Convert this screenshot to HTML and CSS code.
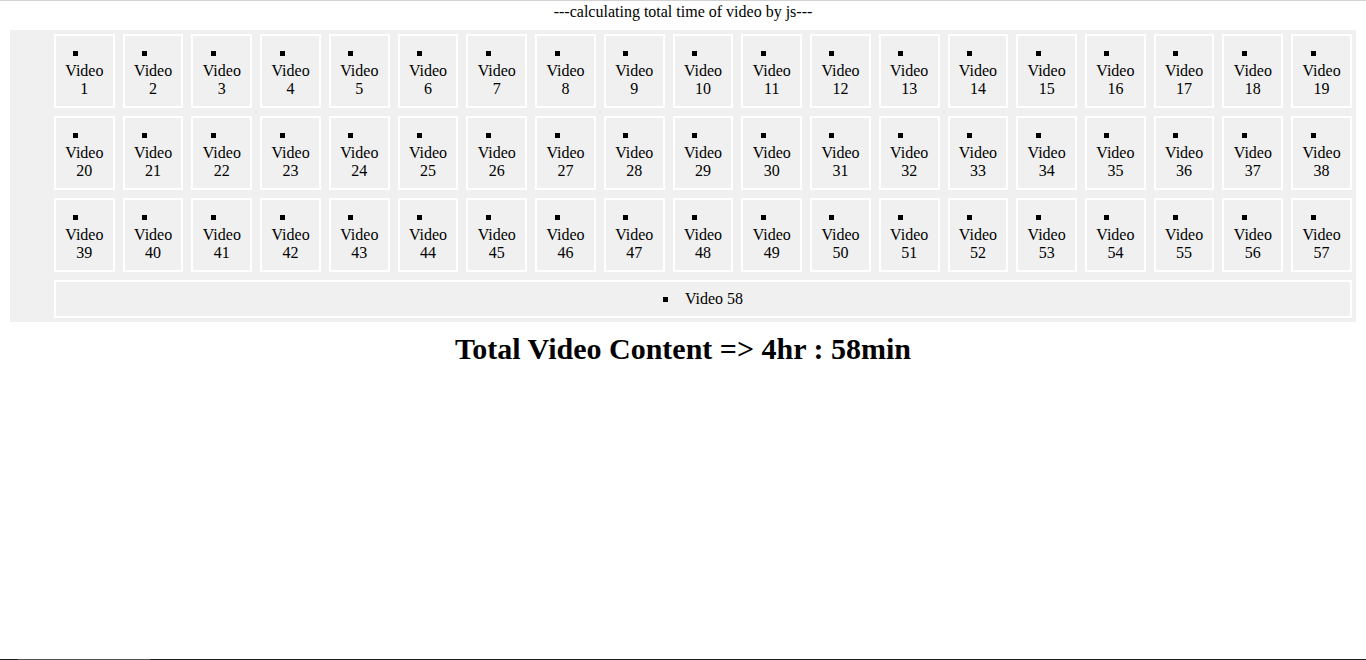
FILE: index.html
```html
<!DOCTYPE html>
<html lang="en">
<head>
<meta charset="utf-8">
<title>Total time of video</title>
<link rel="stylesheet" href="styles.css">
</head>
<body>
<p class="title">---calculating total time of video by js---</p>
<ul class="videos">
<li>Video 1</li><li>Video 2</li><li>Video 3</li><li>Video 4</li><li>Video 5</li><li>Video 6</li><li>Video 7</li><li>Video 8</li><li>Video 9</li><li>Video 10</li>
<li>Video 11</li><li>Video 12</li><li>Video 13</li><li>Video 14</li><li>Video 15</li><li>Video 16</li><li>Video 17</li><li>Video 18</li><li>Video 19</li><li>Video 20</li>
<li>Video 21</li><li>Video 22</li><li>Video 23</li><li>Video 24</li><li>Video 25</li><li>Video 26</li><li>Video 27</li><li>Video 28</li><li>Video 29</li><li>Video 30</li>
<li>Video 31</li><li>Video 32</li><li>Video 33</li><li>Video 34</li><li>Video 35</li><li>Video 36</li><li>Video 37</li><li>Video 38</li><li>Video 39</li><li>Video 40</li>
<li>Video 41</li><li>Video 42</li><li>Video 43</li><li>Video 44</li><li>Video 45</li><li>Video 46</li><li>Video 47</li><li>Video 48</li><li>Video 49</li><li>Video 50</li>
<li>Video 51</li><li>Video 52</li><li>Video 53</li><li>Video 54</li><li>Video 55</li><li>Video 56</li><li>Video 57</li><li>Video 58</li>
</ul>
<h1 class="total">Total Video Content =&gt; 4hr : 58min</h1>
<div class="taskbar"><span class="tb-start"></span><span class="tb-app"></span></div>
</body>
</html>
```
FILE: styles.css
```css
html, body {
  margin: 0;
  padding: 0;
  background: #ffffff;
}

body {
  font-family: "Liberation Serif", "Times New Roman", serif;
  font-size: 16px;
  color: #000;
  border-top: 1px solid #d2d2d2;
}

.title {
  margin: 2px 0 0;
  text-align: center;
  line-height: 18px;
}

.videos {
  display: flex;
  flex-wrap: wrap;
  margin: 9px 10px 0;
  padding: 0 0 0 40px;
  background: #f0f0f0;
  list-style: square inside;
}

.videos li {
  flex: 1 0 auto;
  width: 40px;
  margin: 4px;
  padding: 8px;
  border: 2px solid #ffffff;
  text-align: center;
  line-height: 18px;
}

.total {
  margin: 10px 0 0;
  text-align: center;
  font-size: 30px;
  font-weight: bold;
}

.taskbar {
  position: fixed;
  left: 0;
  right: 0;
  bottom: 0;
  height: 1px;
  display: flex;
  background: #202020;
}

.tb-start {
  width: 18px;
}

.tb-app {
  width: 132px;
  background: #555555;
}
```
